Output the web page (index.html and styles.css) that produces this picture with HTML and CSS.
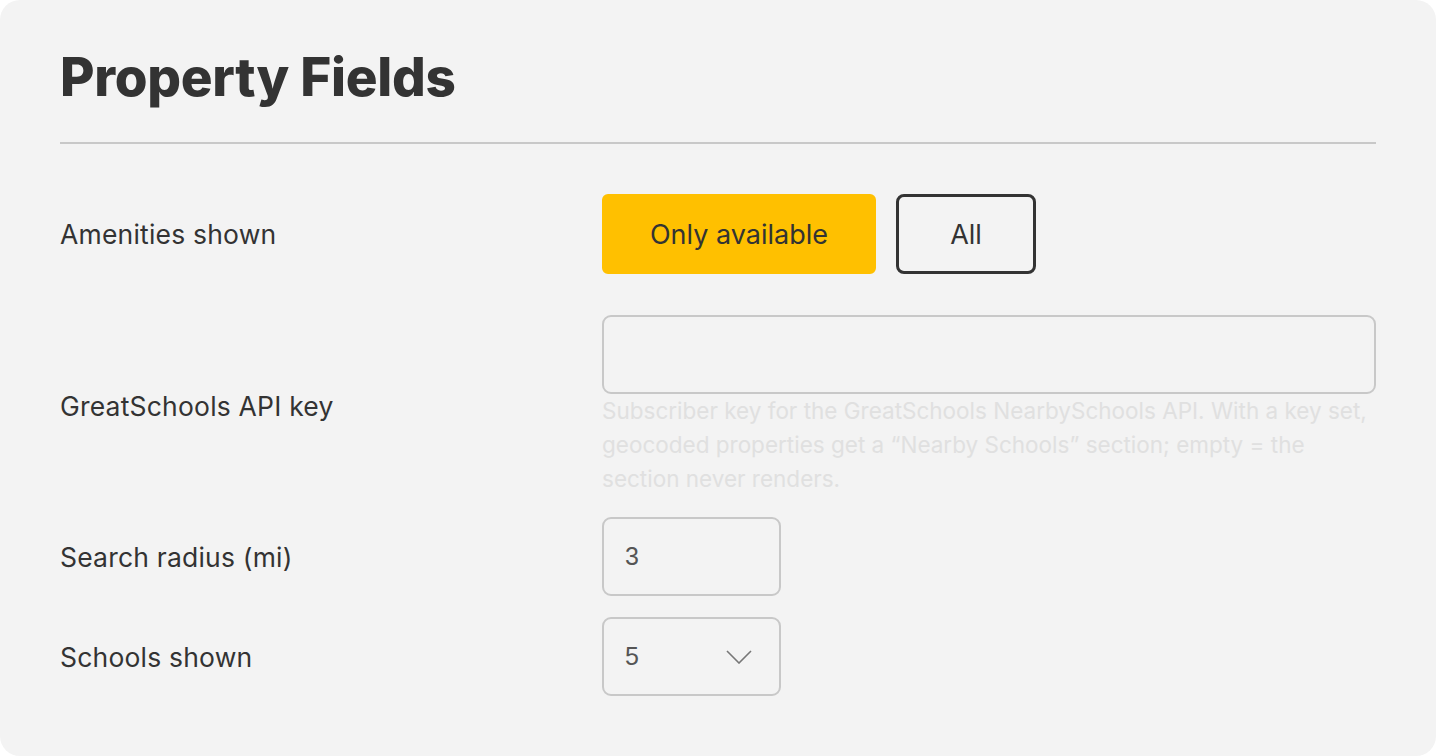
FILE: index.html
```html
<!DOCTYPE html>
<html lang="en">
<head>
    <meta charset="UTF-8">
    <meta name="viewport" content="width=device-width, initial-scale=1.0">
    <title>Property Fields</title>
    <link rel="stylesheet" href="styles.css">
</head>
<body>
    <div class="card">
        <h1>Property Fields</h1>
        <hr>

        <div class="row">
            <label>Amenities shown</label>
            <div class="toggle">
                <button class="opt active">Only available</button>
                <button class="opt">All</button>
            </div>
        </div>

        <div class="row">
            <label for="apikey">GreatSchools API key</label>
            <div class="control">
                <input type="text" id="apikey" class="wide">
                <p class="help">Subscriber key for the GreatSchools NearbySchools API. With a key set, geocoded properties get a “Nearby Schools” section; empty = the section never renders.</p>
            </div>
        </div>

        <div class="row">
            <label for="radius">Search radius (mi)</label>
            <div class="control">
                <input type="text" id="radius" class="small" value="3">
            </div>
        </div>

        <div class="row">
            <label for="count">Schools shown</label>
            <div class="control">
                <div class="select small">
                    <span>5</span>
                    <svg width="26" height="14" viewBox="0 0 26 14"><polyline points="1,1 13,13 25,1" fill="none" stroke="#777" stroke-width="1.6"/></svg>
                </div>
            </div>
        </div>
    </div>
</body>
</html>
```
FILE: styles.css
```css
* { margin: 0; padding: 0; box-sizing: border-box; }
body {
    background-color: #fff;
    font-family: Inter, "Open Sans", sans-serif;
    color: #333;
}

div.card {
    height: 756px;
    padding: 42px 60px 0 60px;
    background-color: #f3f3f3;
    border-radius: 20px;
}
h1 {
    font-size: 53px;
    font-weight: 800;
    line-height: 70px;
    letter-spacing: -0.3px;
    color: #333;
}
hr {
    margin: 30px 0 50px 0;
    border: 0;
    border-top: 2px solid #c8c8c8;
}

div.row {
    display: grid;
    grid-template-columns: 542px 1fr;
    align-items: center;
    margin-bottom: 21px;
}
div.row:first-of-type { margin-bottom: 41px; }
label {
    font-size: 26.5px;
    letter-spacing: 0.2px;
    color: #333;
}

div.toggle {
    display: flex;
    gap: 20px;
}
button.opt {
    height: 80px;
    padding: 0;
    border: 3px solid #333;
    border-radius: 8px;
    background-color: transparent;
    font-family: inherit;
    font-size: 27px;
    color: #333;
}
button.opt.active {
    width: 274px;
    border-color: #ffc000;
    background-color: #ffc000;
    border-radius: 6px;
}
button.opt:last-child { width: 140px; }

input, div.select {
    height: 79px;
    border: 2px solid #c8c8c8;
    border-radius: 9px;
    background-color: transparent;
    font-family: "Liberation Sans", Arial, sans-serif;
    font-size: 25px;
    color: #555;
    padding: 0 21px;
}
input.wide { width: 100%; display: block; }
.small { width: 179px; }
div.select {
    display: flex;
    align-items: center;
    justify-content: space-between;
}
div.select svg { margin-right: 6px; }

p.help {
    font-size: 22.5px;
    line-height: 34px;
    color: #e0e0e0;
}
```
